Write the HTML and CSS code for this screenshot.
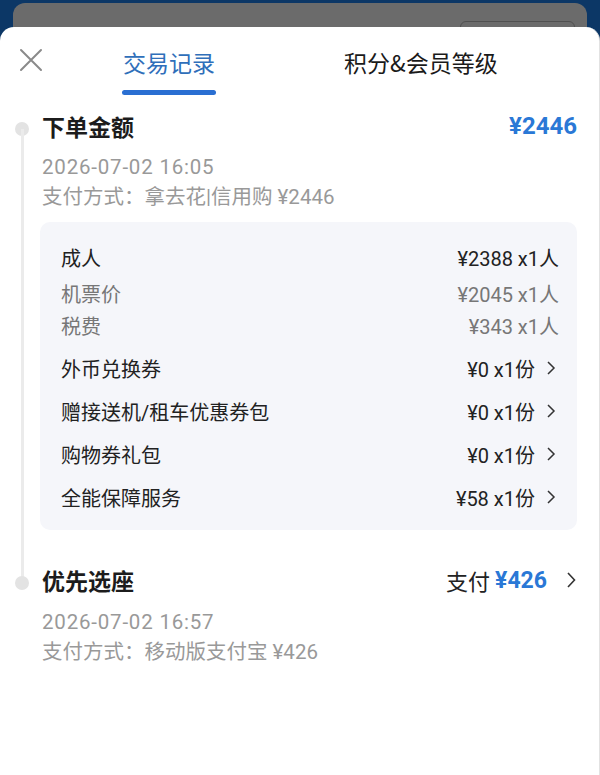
FILE: index.html
```html
<!DOCTYPE html>
<html lang="zh-CN">
<head>
    <meta charset="UTF-8">
    <meta name="viewport" content="width=device-width, initial-scale=1.0">
    <title>交易记录</title>
    <link rel="stylesheet" href="styles.css">
</head>
<body>
    <div class="backdrop">
        <div class="page-card"><span class="page-btn"></span></div>
    </div>

    <div class="sheet">
        <div class="sheet-head">
            <button class="close" aria-label="关闭">
                <svg width="24" height="24" viewBox="0 0 24 24"><path d="M2 2 L22 22 M22 2 L2 22" stroke="#8a8a8a" stroke-width="2" stroke-linecap="round" fill="none"/></svg>
            </button>
            <div class="tab active">交易记录<i class="tab-bar"></i></div>
            <div class="tab">积分&amp;会员等级</div>
        </div>

        <div class="timeline">
            <div class="entry first">
                <div class="entry-head">
                    <span class="entry-title">下单金额</span>
                    <span class="amount">¥2446</span>
                </div>
                <div class="meta"><span class="time">2026-07-02 16:05</span></div>
                <div class="meta">支付方式：拿去花|信用购 ¥2446</div>

                <div class="detail">
                    <div class="row main"><span>成人</span><span>¥2388 x1人</span></div>
                    <div class="row sub"><span>机票价</span><span>¥2045 x1人</span></div>
                    <div class="row sub"><span>税费</span><span>¥343 x1人</span></div>
                    <div class="row link"><span>外币兑换券</span><span class="val">¥0 x1份<svg class="chev" width="10" height="16" viewBox="0 0 10 16"><path d="M2 2 L8 8 L2 14" stroke="#333" stroke-width="1.5" fill="none"/></svg></span></div>
                    <div class="row link"><span>赠接送机/租车优惠券包</span><span class="val">¥0 x1份<svg class="chev" width="10" height="16" viewBox="0 0 10 16"><path d="M2 2 L8 8 L2 14" stroke="#333" stroke-width="1.5" fill="none"/></svg></span></div>
                    <div class="row link"><span>购物券礼包</span><span class="val">¥0 x1份<svg class="chev" width="10" height="16" viewBox="0 0 10 16"><path d="M2 2 L8 8 L2 14" stroke="#333" stroke-width="1.5" fill="none"/></svg></span></div>
                    <div class="row link"><span>全能保障服务</span><span class="val">¥58 x1份<svg class="chev" width="10" height="16" viewBox="0 0 10 16"><path d="M2 2 L8 8 L2 14" stroke="#333" stroke-width="1.5" fill="none"/></svg></span></div>
                </div>
            </div>

            <div class="entry second">
                <div class="entry-head">
                    <span class="entry-title">优先选座</span>
                    <span class="pay">支付<b class="amount">¥426</b><svg class="chev big" width="10" height="18" viewBox="0 0 10 18"><path d="M2 2 L8.5 9 L2 16" stroke="#333" stroke-width="1.6" fill="none"/></svg></span>
                </div>
                <div class="meta"><span class="time">2026-07-02 16:57</span></div>
                <div class="meta">支付方式：移动版支付宝 ¥426</div>
            </div>
        </div>
    </div>
</body>
</html>
```

FILE: styles.css
```css
* {
    box-sizing: border-box;
}
body {
    margin: 0;
    background-color: #0c3766;
    font-family: Roboto, "Noto Sans CJK SC", sans-serif;
    color: #1c1c1c;
    height: 775px;
    overflow: hidden;
}

/* страница под шторкой */
.backdrop {
    height: 43px;
    padding: 3px 13px 0 13px;
}
.page-card {
    height: 40px;
    background-color: #6b6b6b;
    border-radius: 12px 12px 0 0;
    position: relative;
}
.page-btn {
    position: absolute;
    right: 12px;
    top: 18px;
    width: 115px;
    height: 30px;
    border: 1px solid #505050;
    border-radius: 6px;
}

.sheet {
    margin-top: -16px;
    position: relative;
    background-color: #fff;
    border-radius: 14px 14px 0 0;
    border-right: 1px solid #e2e2e2;
    height: 760px;
    padding: 0 22px 0 42px;
}

.sheet-head {
    display: flex;
    align-items: flex-start;
    padding-top: 19px;
    height: 73px;
    margin-left: -42px;
}
.close {
    margin: 2px 0 0 19px;
    padding: 0;
    border: none;
    background: none;
    width: 24px;
    height: 24px;
}
.tab {
    display: flex;
    flex-direction: column;
    align-items: center;
    font-size: 23px;
    line-height: 32px;
    color: #1a1a1a;
    font-family: "Noto Sans CJK SC", sans-serif;
}
.tab.active {
    margin-left: 79px;
    color: #2f6fba;
}
.tab + .tab {
    margin-left: 128px;
}
.tab-bar {
    display: block;
    width: 94px;
    height: 5px;
    margin-top: 12px;
    border-radius: 3px;
    background-color: #2a6fd2;
}

.timeline {
    padding-top: 10px;
}
.entry {
    position: relative;
}
.entry::before {
    content: "";
    position: absolute;
    left: -27px;
    top: 12px;
    width: 14px;
    height: 14px;
    border-radius: 50%;
    background-color: #e3e3e3;
}
.entry.first::after {
    content: "";
    position: absolute;
    left: -21px;
    top: 19px;
    bottom: -50px;
    width: 3px;
    background-color: #ebebeb;
}
.entry.second {
    margin-top: 34px;
}

.entry-head {
    display: flex;
    justify-content: space-between;
    align-items: center;
    height: 32px;
    margin-bottom: 10px;
}
.entry.second .entry-head {
    margin-bottom: 11px;
}
.entry-title {
    font-family: "Noto Sans CJK SC", sans-serif;
    font-weight: bold;
    font-size: 23px;
}
.amount {
    font-weight: bold;
    font-size: 24px;
    color: #2a78d6;
}
.pay {
    display: flex;
    align-items: center;
    font-size: 22px;
    color: #222;
}
.pay .amount {
    margin-left: 5px;
    font-size: 23px;
}
.chev {
    margin-left: 10px;
}
.chev.big {
    margin-left: 19px;
    margin-right: 1px;
}

.meta {
    font-size: 20.5px;
    line-height: 30px;
    color: #999;
}
.meta .time {
    letter-spacing: 0.8px;
}

.detail {
    margin: 10px 0 0 -2px;
    padding: 19px 18px 17px 21px;
    background-color: #f5f6fa;
    border-radius: 10px;
}
.row {
    display: flex;
    justify-content: space-between;
    align-items: center;
    height: 32px;
    font-size: 20px;
    color: #222;
}
.row.main {
    margin-bottom: 4px;
}
.row.sub {
    color: #777;
}
.row.link {
    margin-top: 11px;
}
.row .val {
    display: flex;
    align-items: center;
}
.row .chev {
    margin: 0 3px 0 11px;
}
```
